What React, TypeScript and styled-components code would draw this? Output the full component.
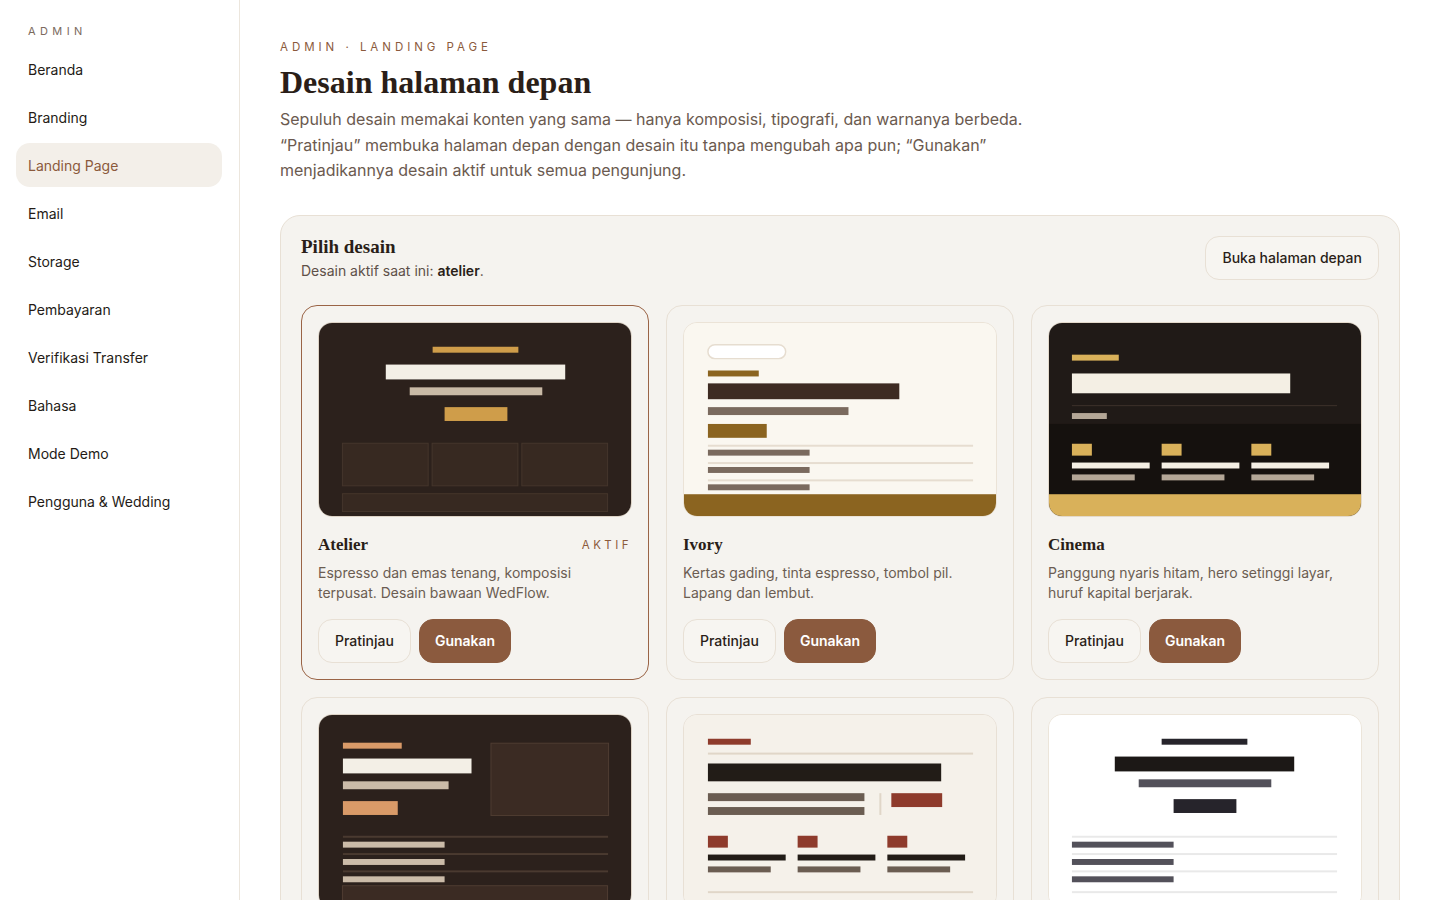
import React from "react";
import styled, { createGlobalStyle, css } from "styled-components";

const GlobalStyle = createGlobalStyle`
  * { box-sizing: border-box; }
  body {
    margin: 0;
    background: #ffffff;
    color: #2a1f1a;
    font-family: "Inter", "Noto Sans", sans-serif;
    -webkit-font-smoothing: antialiased;
  }
`;

const SERIF = `"Liberation Serif", "DejaVu Serif", serif`;

const Shell = styled.div`
  display: flex;
  min-height: 100vh;
`;

const Sidebar = styled.aside`
  width: 240px;
  flex-shrink: 0;
  border-right: 1px solid #ece6dd;
  padding: 24px 17px 24px 16px;
  display: flex;
  flex-direction: column;
  gap: 4px;
`;

const SideLabel = styled.div`
  font-size: 11px;
  letter-spacing: 0.4em;
  color: #7c6a5d;
  padding: 0 12px;
  margin-bottom: 5px;
  line-height: 14px;
`;

const NavItem = styled.a<{ $active?: boolean }>`
  display: flex;
  align-items: center;
  height: 44px;
  padding: 0 12px;
  border-radius: 14px;
  font-size: 14px;
  color: #241b16;
  text-decoration: none;
  cursor: pointer;
  ${(p) =>
    p.$active &&
    css`
      background: #f3efe9;
      color: #8b5a3c;
    `}
`;

const Main = styled.main`
  flex: 1;
  padding: 40px 40px 60px 40px;
`;

const Eyebrow = styled.div`
  font-size: 11.5px;
  letter-spacing: 0.345em;
  color: #8b5a3c;
  line-height: 14px;
`;

const Title = styled.h1`
  font-family: ${SERIF};
  font-weight: 700;
  font-size: 32px;
  line-height: 42px;
  margin: 7px 0 4px;
  color: #2a1e18;
`;

const Lead = styled.p`
  margin: 0;
  max-width: 760px;
  font-size: 16px;
  line-height: 25.6px;
  color: #6b5a4f;
`;

const Panel = styled.section`
  margin-top: 31px;
  background: #f5f3ef;
  border: 1px solid #e8e0d5;
  border-radius: 20px;
  padding: 20px 20px 24px;
`;

const PanelHead = styled.div`
  display: flex;
  justify-content: space-between;
  align-items: flex-start;
  margin-bottom: 25px;
`;

const PanelTitle = styled.h2`
  font-family: ${SERIF};
  font-size: 19px;
  font-weight: 700;
  margin: 0;
  line-height: 22px;
  color: #2a1e18;
`;

const PanelSub = styled.div`
  font-size: 14px;
  margin-top: 4px;
  color: #5e5048;
  b {
    color: #2a1e18;
    font-weight: 600;
  }
`;

const Grid = styled.div`
  display: grid;
  grid-template-columns: repeat(3, 1fr);
  gap: 17px;
`;

const Card = styled.article<{ $active?: boolean }>`
  background: #f5f3ef;
  border: 1px solid ${(p) => (p.$active ? "#9a6446" : "#e8e0d5")};
  border-radius: 16px;
  padding: 16px;
  display: flex;
  flex-direction: column;
`;

const Preview = styled.div<{ $line: string }>`
  height: 195px;
  border-radius: 14px;
  overflow: hidden;
  border: 1px solid ${(p) => p.$line};
  svg {
    display: block;
    width: 100%;
    height: 100%;
  }
`;

const NameRow = styled.div`
  display: flex;
  justify-content: space-between;
  align-items: center;
  margin-top: 16px;
`;

const Name = styled.h3`
  font-family: ${SERIF};
  font-size: 17px;
  font-weight: 700;
  margin: 0;
  line-height: 24px;
  color: #2a1e18;
`;

const Badge = styled.span`
  font-size: 11.5px;
  letter-spacing: 0.3em;
  color: #8b5a3c;
`;

const Desc = styled.p`
  margin: 6px 0 0;
  font-size: 14px;
  line-height: 20px;
  color: #6b5d52;
  min-height: 40px;
`;

const Actions = styled.div`
  display: flex;
  gap: 8px;
  margin-top: 16px;
`;

const Button = styled.button<{ $primary?: boolean }>`
  height: 44px;
  padding: 0 16px;
  border-radius: 14px;
  font-family: "Inter", sans-serif;
  font-size: 14px;
  font-weight: 500;
  cursor: pointer;
  border: 1px solid #e8e0d5;
  background: #f7f5f1;
  color: #2a1e18;
  ${(p) =>
    p.$primary &&
    css`
      padding: 0 15px;
      background: #8b5a3e;
      border-color: #8b5a3e;
      color: #ffffff;
      font-weight: 600;
    `}
`;

const W = 313;
const H = 195;

const Frame: React.FC<{ children: React.ReactNode }> = ({ children }) => (
  <svg viewBox={`0 0 ${W} ${H}`} preserveAspectRatio="none">
    {children}
  </svg>
);

const rows = [0, 1, 2];

const Atelier = () => (
  <Frame>
    <rect width={W} height={H} fill="#2c211c" />
    <rect x={114} y={24} width={86} height={6} fill="#cf9d4a" />
    <rect x={67} y={42} width={180} height={15} fill="#f3efe6" />
    <rect x={91} y={65} width={133} height={8} fill="#c9baa6" />
    <rect x={126} y={85} width={63} height={14} fill="#cf9d4a" />
    {rows.map((i) => (
      <rect key={i} x={23.5 + i * 90} y={121.5} width={86} height={43} fill="#372921" stroke="#45362c" />
    ))}
    <rect x={23.5} y={172.5} width={266} height={18} fill="#372921" stroke="#45362c" />
  </Frame>
);

const Ivory = () => (
  <Frame>
    <rect width={W} height={H} fill="#faf7f0" />
    <rect x={24} y={22} width={78} height={14} rx={7} fill="#ffffff" stroke="#e6ddd0" strokeWidth={1.5} />
    <rect x={24} y={48} width={51} height={6} fill="#8b6420" />
    <rect x={24} y={61} width={192} height={16} fill="#3d2b22" />
    <rect x={24} y={85} width={141} height={8} fill="#7a6a5e" />
    <rect x={24} y={102} width={59} height={14} fill="#8b6420" />
    {rows.map((i) => (
      <g key={i}>
        <rect x={24} y={123 + i * 17.5} width={266} height={2} fill="#e6ddd0" />
        <rect x={24} y={128 + i * 17.5} width={102} height={6} fill="#7a6a5e" />
      </g>
    ))}
    <rect y={173} width={W} height={22} fill="#8b6420" />
  </Frame>
);

const Cinema = () => (
  <Frame>
    <rect width={W} height={H} fill="#201a17" />
    <rect y={102} width={W} height={71} fill="#15110e" />
    <rect y={173} width={W} height={22} fill="#d9b15a" />
    <rect x={23} y={32} width={47} height={6} fill="#d9b15a" />
    <rect x={23} y={51} width={219} height={20} fill="#f4efe4" />
    <rect x={23} y={83} width={266} height={1} fill="#3d322b" />
    <rect x={23} y={91} width={35} height={6} fill="#b3a696" />
    {rows.map((i) => (
      <g key={i}>
        <rect x={23 + i * 90} y={122} width={20} height={12} fill="#d9b15a" />
        <rect x={23 + i * 90} y={141} width={78} height={6} fill="#f4efe4" />
        <rect x={23 + i * 90} y={153} width={63} height={6} fill="#b3a696" />
      </g>
    ))}
  </Frame>
);

const Senja = () => (
  <Frame>
    <rect width={W} height={H} fill="#2c211c" />
    <rect x={24} y={28} width={59} height={6} fill="#d99a68" />
    <rect x={24} y={44} width={129} height={15} fill="#f3efe6" />
    <rect x={24} y={67} width={106} height={8} fill="#cbbba8" />
    <rect x={24} y={87} width={55} height={14} fill="#d99a68" />
    <rect x={172.5} y={28.5} width={118} height={73} fill="#3b2b23" stroke="#4f3d32" />
    {rows.map((i) => (
      <g key={i}>
        <rect x={24} y={122 + i * 17.5} width={266} height={2} fill="#4a3a30" />
        <rect x={24} y={128 + i * 17.5} width={102} height={6} fill="#cbbba8" />
      </g>
    ))}
    <rect x={23.5} y={172.5} width={266} height={30} fill="#3b2b23" stroke="#4f3d32" />
  </Frame>
);

const Editorial = () => (
  <Frame>
    <rect width={W} height={H} fill="#f5f1ea" />
    <rect x={24} y={24} width={43} height={6} fill="#8e3b2c" />
    <rect x={24} y={38} width={266} height={2} fill="#e0d6c8" />
    <rect x={24} y={49} width={234} height={18} fill="#221c17" />
    <rect x={24} y={79} width={157} height={8} fill="#6b5d52" />
    <rect x={24} y={93} width={157} height={8} fill="#6b5d52" />
    <rect x={196} y={79} width={2} height={22} fill="#e0d6c8" />
    <rect x={208} y={79} width={51} height={14} fill="#8e3b2c" />
    {rows.map((i) => (
      <g key={i}>
        <rect x={24 + i * 90} y={122} width={20} height={12} fill="#8e3b2c" />
        <rect x={24 + i * 90} y={141} width={78} height={6} fill="#221c17" />
        <rect x={24 + i * 90} y={153} width={63} height={6} fill="#6b5d52" />
      </g>
    ))}
    <rect x={24} y={178} width={266} height={2} fill="#e0d6c8" />
  </Frame>
);

const Minimal = () => (
  <Frame>
    <rect width={W} height={H} fill="#ffffff" />
    <rect x={113} y={24} width={86} height={6} fill="#26242b" />
    <rect x={66} y={42} width={180} height={15} fill="#1c1816" />
    <rect x={90} y={65} width={133} height={8} fill="#53515a" />
    <rect x={125} y={85} width={63} height={14} fill="#26242b" />
    {rows.map((i) => (
      <g key={i}>
        <rect x={23} y={122 + i * 17.5} width={266} height={2} fill="#e9e9e9" />
        <rect x={23} y={128 + i * 17.5} width={102} height={6} fill="#53515a" />
      </g>
    ))}
    <rect x={23} y={178} width={266} height={2} fill="#e9e9e9" />
  </Frame>
);

type Design = {
  id: string;
  name: string;
  desc: string;
  line: string;
  Thumb: React.FC;
};

const designs: Design[] = [
  { id: "atelier", name: "Atelier", desc: "Espresso dan emas tenang, komposisi terpusat. Desain bawaan WedFlow.", line: "#ddd3c6", Thumb: Atelier },
  { id: "ivory", name: "Ivory", desc: "Kertas gading, tinta espresso, tombol pil. Lapang dan lembut.", line: "#ebe3d7", Thumb: Ivory },
  { id: "cinema", name: "Cinema", desc: "Panggung nyaris hitam, hero setinggi layar, huruf kapital berjarak.", line: "#e3d9cb", Thumb: Cinema },
  { id: "senja", name: "Senja", desc: "Terakota hangat di atas espresso, hero terbelah dengan bingkai foto.", line: "#ddd3c6", Thumb: Senja },
  { id: "editorial", name: "Editorial", desc: "Tata letak majalah, aksen merah bata, kolom yang rapi.", line: "#e8e0d5", Thumb: Editorial },
  { id: "minimal", name: "Minimal", desc: "Putih bersih, tipografi hitam, tanpa ornamen tambahan.", line: "#ece5da", Thumb: Minimal },
];

const nav = [
  "Beranda",
  "Branding",
  "Landing Page",
  "Email",
  "Storage",
  "Pembayaran",
  "Verifikasi Transfer",
  "Bahasa",
  "Mode Demo",
  "Pengguna & Wedding",
];

const active = "atelier";

export default function App() {
  return (
    <>
      <GlobalStyle />
      <Shell>
        <Sidebar>
          <SideLabel>ADMIN</SideLabel>
          {nav.map((n) => (
            <NavItem key={n} $active={n === "Landing Page"}>
              {n}
            </NavItem>
          ))}
        </Sidebar>
        <Main>
          <Eyebrow>ADMIN · LANDING PAGE</Eyebrow>
          <Title>Desain halaman depan</Title>
          <Lead>
            Sepuluh desain memakai konten yang sama — hanya komposisi, tipografi, dan warnanya berbeda.
            “Pratinjau” membuka halaman depan dengan desain itu tanpa mengubah apa pun; “Gunakan”
            menjadikannya desain aktif untuk semua pengunjung.
          </Lead>

          <Panel>
            <PanelHead>
              <div>
                <PanelTitle>Pilih desain</PanelTitle>
                <PanelSub>
                  Desain aktif saat ini: <b>{active}</b>.
                </PanelSub>
              </div>
              <Button>Buka halaman depan</Button>
            </PanelHead>
            <Grid>
              {designs.map((d) => (
                <Card key={d.id} $active={d.id === active}>
                  <Preview $line={d.line}>
                    <d.Thumb />
                  </Preview>
                  <NameRow>
                    <Name>{d.name}</Name>
                    {d.id === active && <Badge>AKTIF</Badge>}
                  </NameRow>
                  <Desc>{d.desc}</Desc>
                  <Actions>
                    <Button>Pratinjau</Button>
                    <Button $primary>Gunakan</Button>
                  </Actions>
                </Card>
              ))}
            </Grid>
          </Panel>
        </Main>
      </Shell>
    </>
  );
}
